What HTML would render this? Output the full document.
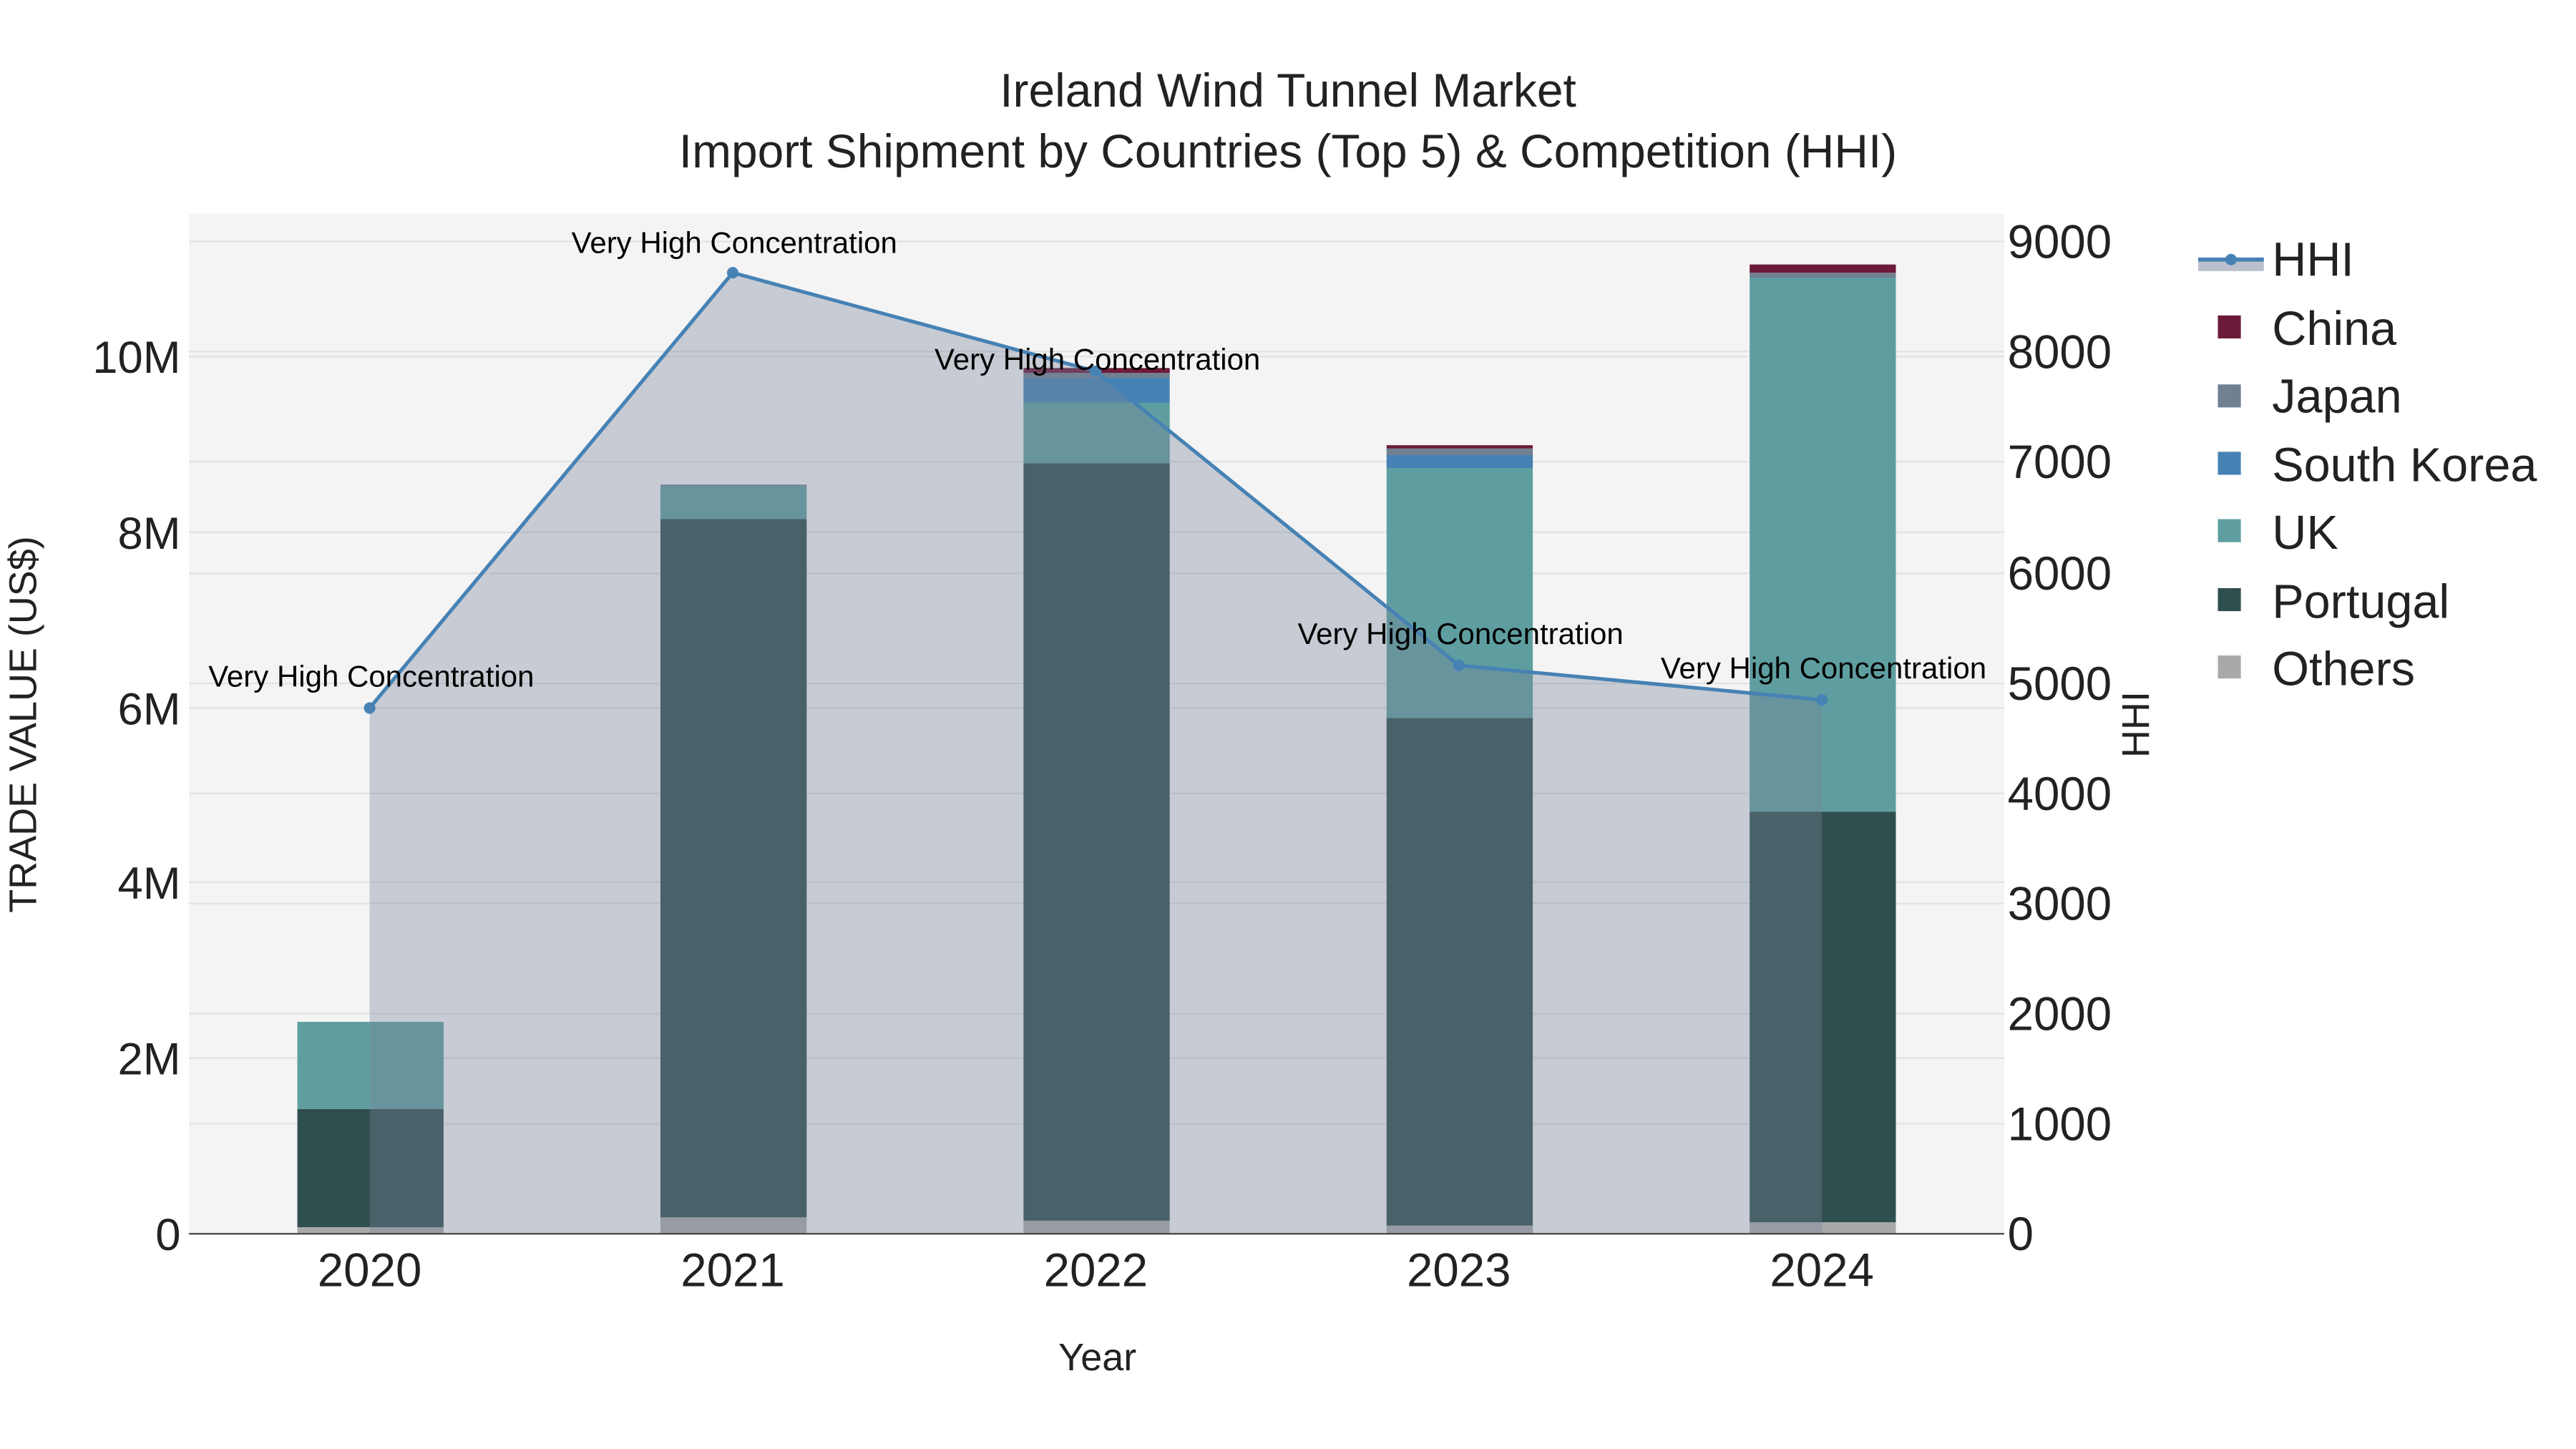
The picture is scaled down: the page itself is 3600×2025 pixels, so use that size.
<!DOCTYPE html>
<html><head><meta charset="utf-8"><style>
html,body{margin:0;padding:0;background:#fff;}
svg{display:block;font-family:"Liberation Sans",Arial,sans-serif;}
</style></head><body>
<svg width="3600" height="2025" viewBox="0 0 1568 882" preserveAspectRatio="none" xmlns="http://www.w3.org/2000/svg">
<rect width="1568" height="882" fill="#fff"/>
<rect x="115" y="130" width="1105" height="621" fill="#f4f4f4"/>
<g stroke="#e2e2e2" stroke-width="1">
<line x1="115" x2="1220" y1="644" y2="644"/><line x1="115" x2="1220" y1="537" y2="537"/>
<line x1="115" x2="1220" y1="431" y2="431"/><line x1="115" x2="1220" y1="324" y2="324"/>
<line x1="115" x2="1220" y1="217" y2="217"/>
<line x1="115" x2="1220" y1="684" y2="684"/><line x1="115" x2="1220" y1="617" y2="617"/>
<line x1="115" x2="1220" y1="550" y2="550"/><line x1="115" x2="1220" y1="483" y2="483"/>
<line x1="115" x2="1220" y1="416" y2="416"/><line x1="115" x2="1220" y1="349" y2="349"/>
<line x1="115" x2="1220" y1="281" y2="281"/><line x1="115" x2="1220" y1="214" y2="214"/>
<line x1="115" x2="1220" y1="147" y2="147"/>
</g>
<g>
<rect x="181" y="747" width="89" height="4" fill="#a9a9a9"/>
<rect x="181" y="675" width="89" height="72" fill="#2f4f4f"/>
<rect x="181" y="622" width="89" height="53" fill="#5f9ea0"/>

<rect x="402" y="741" width="89" height="10" fill="#a9a9a9"/>
<rect x="402" y="316" width="89" height="425" fill="#2f4f4f"/>
<rect x="402" y="296" width="89" height="20" fill="#5f9ea0"/>
<rect x="402" y="295" width="89" height="1" fill="#708090"/>

<rect x="623" y="743" width="89" height="8" fill="#a9a9a9"/>
<rect x="623" y="282" width="89" height="461" fill="#2f4f4f"/>
<rect x="623" y="245" width="89" height="37" fill="#5f9ea0"/>
<rect x="623" y="230" width="89" height="15" fill="#4682b4"/>
<rect x="623" y="227" width="89" height="3" fill="#708090"/>
<rect x="623" y="224" width="89" height="3" fill="#6b1a3a"/>

<rect x="844" y="746" width="89" height="5" fill="#a9a9a9"/>
<rect x="844" y="437" width="89" height="309" fill="#2f4f4f"/>
<rect x="844" y="285" width="89" height="152" fill="#5f9ea0"/>
<rect x="844" y="277" width="89" height="8" fill="#4682b4"/>
<rect x="844" y="273" width="89" height="4" fill="#708090"/>
<rect x="844" y="271" width="89" height="2" fill="#6b1a3a"/>

<rect x="1065" y="744" width="89" height="7" fill="#a9a9a9"/>
<rect x="1065" y="494" width="89" height="250" fill="#2f4f4f"/>
<rect x="1065" y="169" width="89" height="325" fill="#5f9ea0"/>
<rect x="1065" y="166" width="89" height="3" fill="#708090"/>
<rect x="1065" y="161" width="89" height="5" fill="#6b1a3a"/>
</g>
<polygon points="225,431 446,166 667,226 888,405 1109,426 1109,751 225,751" fill="rgba(118,130,152,0.36)"/>
<polyline points="225,431 446,166 667,226 888,405 1109,426" fill="none" stroke="#4682b4" stroke-width="2.2"/>
<g fill="#4682b4"><circle cx="225" cy="431" r="3.5"/><circle cx="446" cy="166" r="3.5"/><circle cx="667" cy="226" r="3.5"/><circle cx="888" cy="405" r="3.5"/><circle cx="1109" cy="426" r="3.5"/></g>
<line x1="115" x2="1220" y1="751" y2="751" stroke="#444" stroke-width="1"/>
<g font-size="18.3" fill="#000" text-anchor="middle">
<text x="226" y="418">Very High Concentration</text>
<text x="447" y="154">Very High Concentration</text>
<text x="668" y="225">Very High Concentration</text>
<text x="889" y="392">Very High Concentration</text>
<text x="1110" y="413">Very High Concentration</text>
</g>
<g text-anchor="middle" fill="#222">
<text x="784" y="65" font-size="28.7">Ireland Wind Tunnel Market</text>
<text x="784" y="102" font-size="28.7">Import Shipment by Countries (Top 5) &amp; Competition (HHI)</text>
<text x="668" y="834" font-size="23.5">Year</text>
</g>
<text transform="translate(22,441) rotate(-90)" text-anchor="middle" font-size="23.5" fill="#222">TRADE VALUE (US$)</text>
<text transform="translate(1308,441) rotate(-90)" text-anchor="middle" font-size="23.5" fill="#222">HHI</text>
<g font-size="27.6" fill="#222" text-anchor="end">
<text x="110" y="761">0</text><text x="110" y="654">2M</text><text x="110" y="547">4M</text>
<text x="110" y="441">6M</text><text x="110" y="334">8M</text><text x="110" y="227">10M</text>
</g>
<g font-size="28.5" fill="#222" text-anchor="start">
<text x="1222" y="761">0</text><text x="1222" y="694">1000</text><text x="1222" y="627">2000</text>
<text x="1222" y="560">3000</text><text x="1222" y="493">4000</text><text x="1222" y="426">5000</text>
<text x="1222" y="359">6000</text><text x="1222" y="291">7000</text><text x="1222" y="224">8000</text>
<text x="1222" y="157">9000</text>
</g>
<g font-size="28.5" fill="#222" text-anchor="middle">
<text x="225" y="783">2020</text><text x="446" y="783">2021</text><text x="667" y="783">2022</text>
<text x="888" y="783">2023</text><text x="1109" y="783">2024</text>
</g>
<rect x="1338" y="158" width="40" height="7" fill="rgba(118,130,152,0.5)"/>
<line x1="1338" x2="1378" y1="158" y2="158" stroke="#4682b4" stroke-width="2.5"/>
<circle cx="1358" cy="158" r="3.5" fill="#4682b4"/>
<g>
<rect x="1350" y="192" width="14" height="14" fill="#6b1a3a"/>
<rect x="1350" y="234" width="14" height="14" fill="#708090"/>
<rect x="1350" y="275" width="14" height="14" fill="#4682b4"/>
<rect x="1350" y="316" width="14" height="14" fill="#5f9ea0"/>
<rect x="1350" y="358" width="14" height="14" fill="#2f4f4f"/>
<rect x="1350" y="399" width="14" height="14" fill="#a9a9a9"/>
</g>
<g font-size="29" fill="#222">
<text x="1383" y="168">HHI</text>
<text x="1383" y="210">China</text>
<text x="1383" y="251">Japan</text>
<text x="1383" y="293">South Korea</text>
<text x="1383" y="334">UK</text>
<text x="1383" y="376">Portugal</text>
<text x="1383" y="417">Others</text>
</g>
</svg>
</body></html>
